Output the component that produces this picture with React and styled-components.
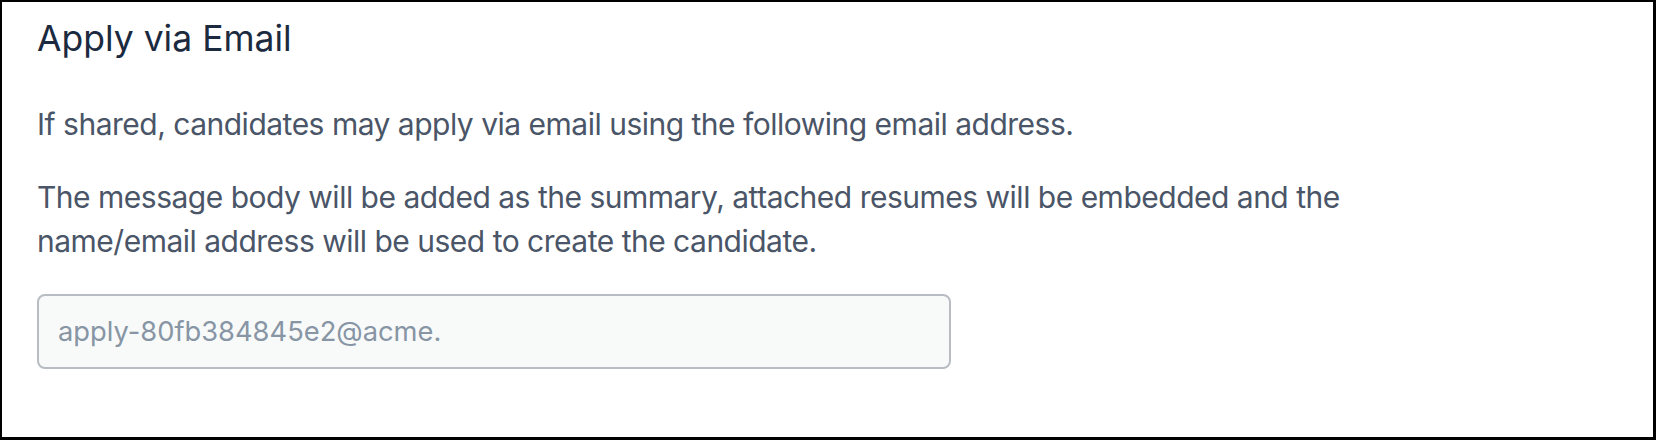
import styled, { createGlobalStyle } from 'styled-components'

const GlobalStyle = createGlobalStyle`
    html, body {
        margin: 0;
        padding: 0;
        background: #ffffff;
    }
    * {
        box-sizing: border-box;
    }
`

const font = `Inter, "Noto Sans", sans-serif`

const Panel = styled.section`
    width: 1656px;
    height: 440px;
    border-style: solid;
    border-color: #000000;
    border-width: 2px 3px 3px 2px;
    padding: 15px 35px 0 35px;
    font-family: ${font};
    background: #ffffff;
`
const Title = styled.h2`
    margin: 0;
    font-size: 35.5px;
    line-height: 44px;
    font-weight: 400;
    color: #1b2a3f;
`
const Text = styled.p`
    margin: ${p => p.$top}px 0 0 0;
    max-width: 1330px;
    font-size: 30px;
    letter-spacing: -0.5px;
    line-height: 44px;
    font-weight: 400;
    color: #4a5568;
`
const EmailField = styled.input`
    display: block;
    margin-top: 31px;
    width: 914px;
    height: 75px;
    padding: 0 19px;
    border: 2px solid #b7bdc3;
    border-radius: 8px;
    background: #f8fafa;
    font-family: ${font};
    font-size: 27.3px;
    letter-spacing: 0;
    color: #8795a4;
    outline: none;
`

const App = () => {
    return <>
        <GlobalStyle />
        <Panel>
            <Title>Apply via Email</Title>
            <Text $top={41}>If shared, candidates may apply via email using the following email address.</Text>
            <Text $top={29}>The message body will be added as the summary, attached resumes will be embedded and the name/email address will be used to create the candidate.</Text>
            <EmailField readOnly value="apply-80fb384845e2@acme." />
        </Panel>
    </>
}

export default App
